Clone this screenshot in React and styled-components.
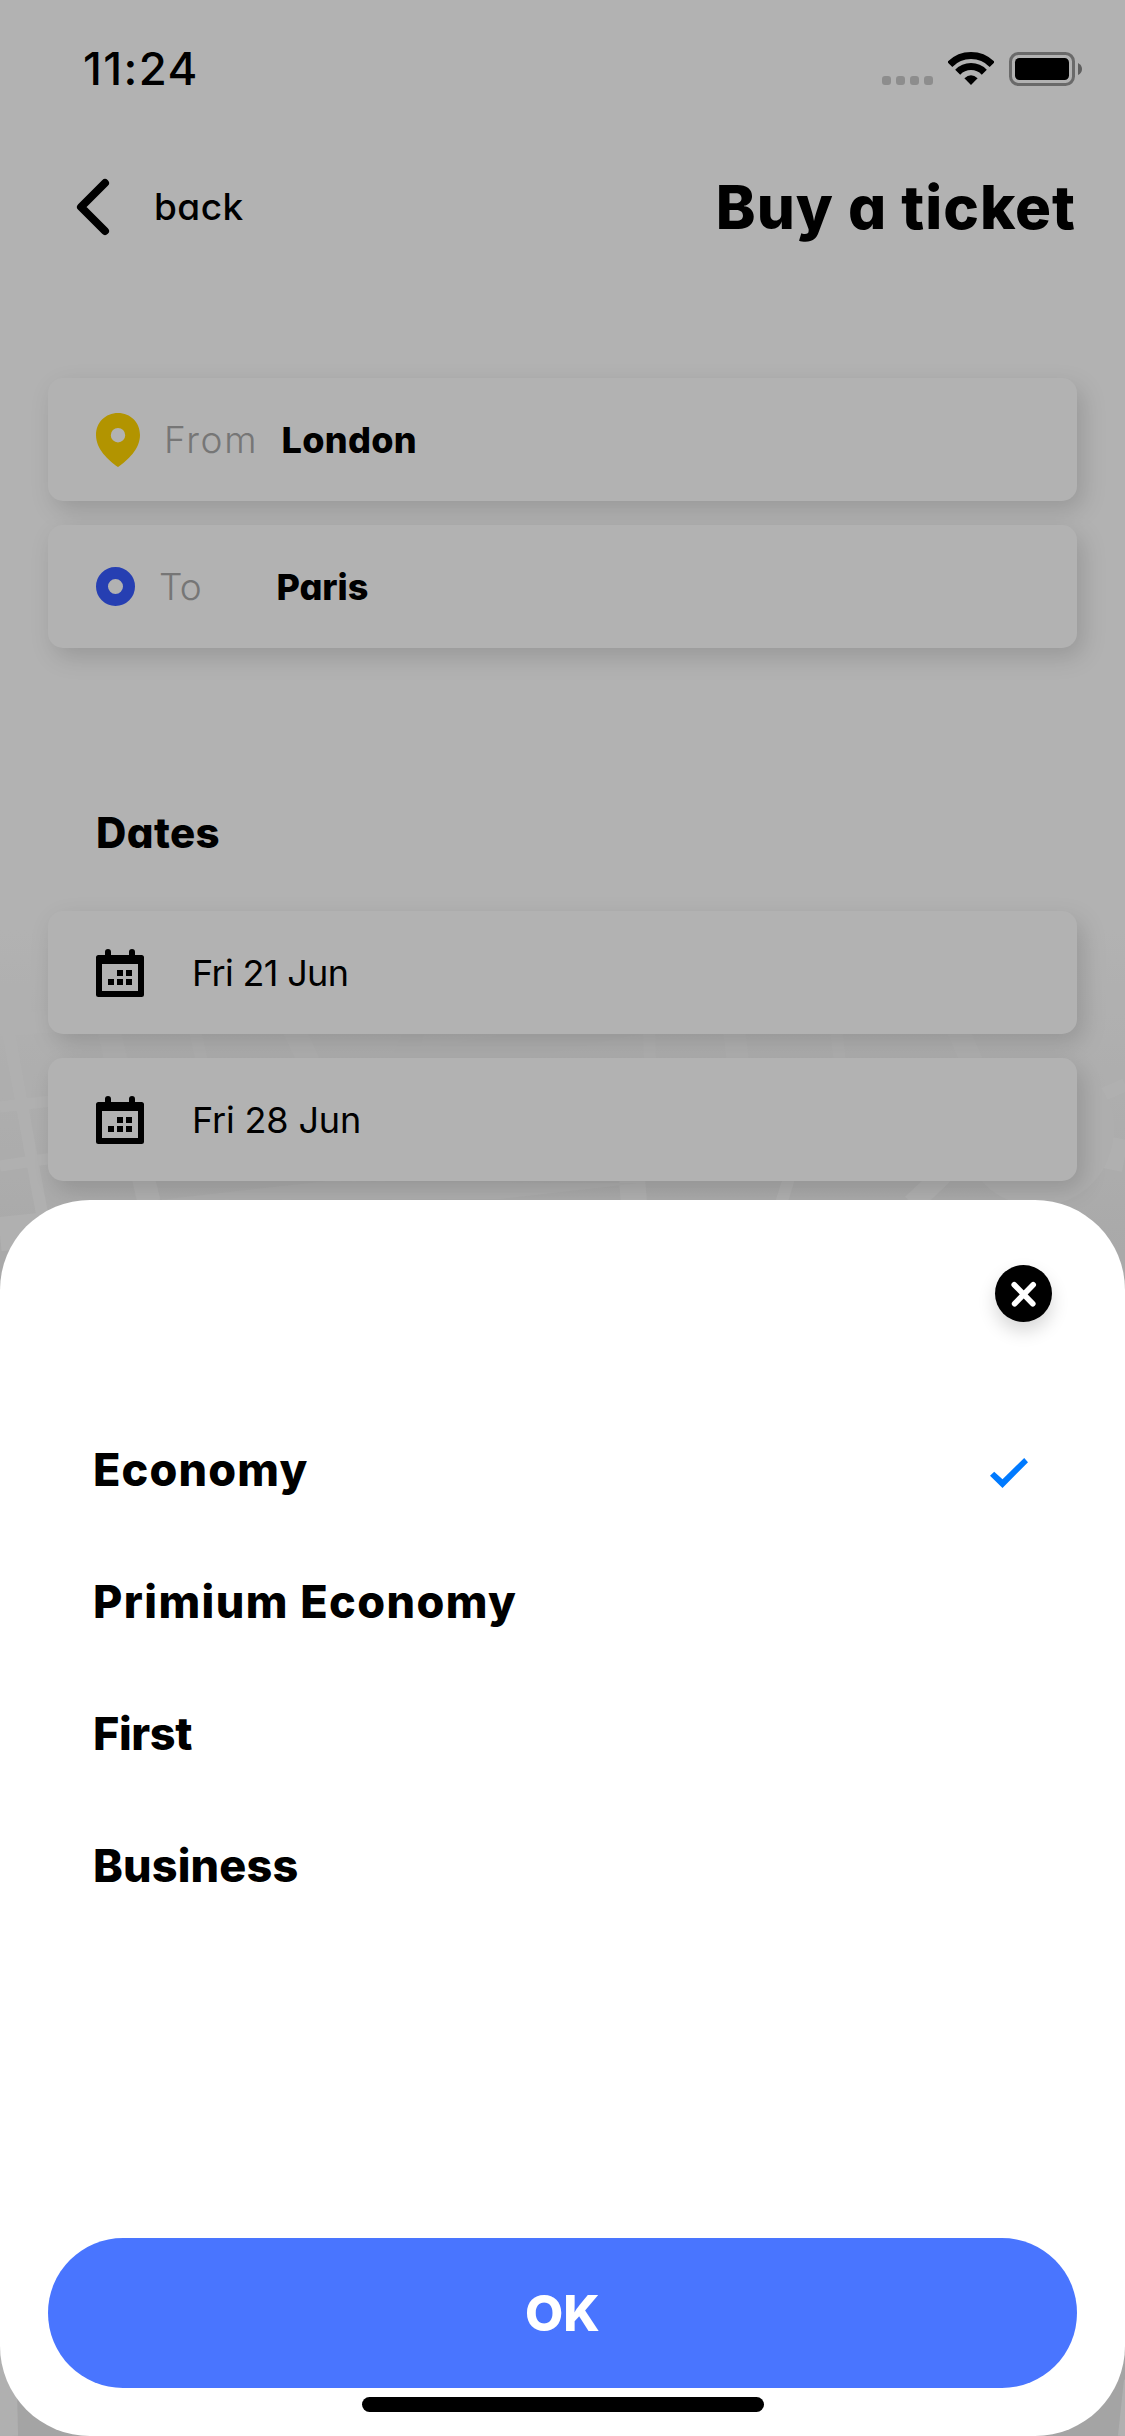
import React from "react";
import styled, { createGlobalStyle } from "styled-components";

const GlobalStyle = createGlobalStyle`
  * { box-sizing: border-box; }
  body { margin: 0; background: #fff; }
`;

const Page = styled.div`
  position: relative;
  width: 1125px;
  height: 2436px;
  overflow: hidden;
  background: #fff;
  color: #000;
  font-family: Inter, "Open Sans", sans-serif;
  font-feature-settings: "cv11" 1;
  font-size: 36px;
  white-space: nowrap;
`;

const MapArt = styled.svg`
  position: absolute;
  left: 0;
  top: 0;
`;

const Screen = styled.main`
  position: relative;
  display: flex;
  flex-direction: column;
`;

const StatusBar = styled.div`
  display: flex;
  align-items: center;
  justify-content: space-between;
  height: 138px;
  padding: 0 42px 0 83px;
`;

const Text = styled.span`
  font-size: ${(p) => p.$size || 36}px;
  font-weight: ${(p) => p.$weight || 400};
  letter-spacing: ${(p) => p.$track || 0}px;
  line-height: 60px;
`;

const StatusIcons = styled.div`
  display: flex;
  align-items: center;
  gap: 15px;
`;

const Header = styled.header`
  display: flex;
  align-items: center;
  justify-content: space-between;
  height: 138px;
  padding: 0 49px 0 75px;
`;

const Title = styled.h1`
  margin: 0;
  font-size: 60px;
  font-weight: 800;
  letter-spacing: 0.98px;
  line-height: 60px;
`;

const BackButton = styled.div`
  display: flex;
  align-items: center;
  gap: 43px;
`;

const CardStack = styled.section`
  display: flex;
  flex-direction: column;
  gap: 24px;
  margin: ${(p) => p.$top}px 48px 0;
`;

const Card = styled.div`
  display: flex;
  align-items: center;
  gap: ${(p) => p.$gap}px;
  height: 123px;
  padding-left: 48px;
  border-radius: 15px;
  background: #fff;
  box-shadow: 6px 9px 24px rgba(0, 0, 0, 0.15);
`;

const Label = styled.div`
  width: 93.5px;
  color: #a9a9a9;
`;

const Heading = styled.h2`
  margin: 155px 0 0 96px;
  font-size: 42px;
  font-weight: 800;
  letter-spacing: 0.4px;
  line-height: 60px;
`;

const Backdrop = styled.div`
  position: absolute;
  inset: 0;
  background: rgba(0, 0, 0, 0.3);
`;

const Sheet = styled.section`
  position: absolute;
  left: 0;
  right: 0;
  bottom: 0;
  height: 1236px;
  display: flex;
  flex-direction: column;
  padding: 65px 48px 24px;
  border-radius: 90px;
  background: #fff;
`;

const CloseButton = styled.div`
  align-self: flex-end;
  display: flex;
  flex: none;
  width: 57px;
  height: 57px;
  margin: 0 25.5px 82px 0;
  border-radius: 50%;
  background: #000;
  box-shadow: 0 9px 18px rgba(0, 0, 0, 0.16);
`;

const Option = styled.div`
  display: flex;
  flex: none;
  align-items: center;
  justify-content: space-between;
  height: 132px;
  padding: 0 49px 0 45px;
`;

const Check = styled.svg`
  margin-top: 5px;
`;

const OkButton = styled.div`
  display: flex;
  flex: none;
  align-items: center;
  justify-content: center;
  height: 150px;
  margin-top: auto;
  border-radius: 75px;
  background: #4975ff;
  color: #fff;
`;

const HomeBar = styled.div`
  align-self: center;
  flex: none;
  width: 402px;
  height: 15px;
  margin-top: 9px;
  border-radius: 8px;
  background: #000;
`;

function StreetMap() {
  return (
    <MapArt width="1125" height="2436" viewBox="0 0 1125 2436">
      <defs>
        <linearGradient id="land" x1="0" y1="930" x2="0" y2="1300" gradientUnits="userSpaceOnUse">
          <stop offset="0" stopColor="#fff" />
          <stop offset="0.3" stopColor="#fbfbfb" />
          <stop offset="0.6" stopColor="#f7f7f7" />
          <stop offset="1" stopColor="#f1f1f1" />
        </linearGradient>
        <linearGradient id="deep" x1="0" y1="1300" x2="0" y2="2300" gradientUnits="userSpaceOnUse">
          <stop offset="0" stopColor="#f1f1f1" />
          <stop offset="1" stopColor="#ebebeb" />
        </linearGradient>
      </defs>
      <rect x="0" y="930" width="1125" height="370" fill="url(#land)" />
      <rect x="0" y="1300" width="1125" height="1136" fill="url(#deep)" />
      <g stroke="#fdfdfd" fill="none">
        <path d="M9 1035 L45 1230" strokeWidth="12" />
        <path d="M0 1107 L60 1100 M0 1166 L60 1157" strokeWidth="11" />
        <path d="M0 1025 L130 1016" strokeWidth="22" />
        <path d="M0 1234 L60 1228" strokeWidth="34" />
        <path d="M109 1030 L149 1202" strokeWidth="23" />
        <path d="M195 1030 L202 1062 M649 1030 L650 1062 M836 1030 L840 1062" strokeWidth="12" />
        <path d="M294 1030 L309 1062 M734 1030 L738 1062 M958 1030 L972 1062" strokeWidth="22" />
        <path d="M632 1178 L634 1204" strokeWidth="26" />
        <path d="M789 1178 L781 1204" strokeWidth="12" />
        <path d="M950 1168 L912 1204" strokeWidth="20" />
        <path d="M1095 1098 L1125 1085" strokeWidth="13" />
        <path d="M1095 1150 L1125 1156" strokeWidth="32" />
        <path d="M6 2300 L9 2436" strokeWidth="18" />
        <path d="M1122 2436 L1128 2380" strokeWidth="8" />
      </g>
      <g fill="#fafafa">
        <path d="M390 1060 L404 1030 L425 1030 L420 1049 L505 1034 L640 1034 L527 1058 Z" />
        <path d="M160 1200 L327 1181 L640 1183 L500 1199 Z" />
        <circle cx="1038" cy="1130" r="76" />
      </g>
    </MapArt>
  );
}

function Wifi() {
  return (
    <svg width="46" height="34" viewBox="0 0 46 34">
      <path d="M1.8 12.5 A29.5 29.5 0 0 1 44.2 12.5 M9.7 20.2 A18.5 18.5 0 0 1 36.3 20.2" fill="none" stroke="#000" strokeWidth="7" />
      <path d="M23 33 L16.4 26.3 Q23 20 29.6 26.3 Z" />
    </svg>
  );
}

function Battery() {
  return (
    <svg width="74" height="34" viewBox="0 0 74 34">
      <rect x="1.5" y="1.5" width="63" height="31" rx="8" fill="none" stroke="#999" strokeWidth="3" />
      <rect x="6" y="6" width="54" height="22" rx="4.5" />
      <path d="M69 11 Q73 13 73 17 Q73 21 69 23 Z" fill="#888" />
    </svg>
  );
}

function SignalDots() {
  return (
    <svg width="51" height="34" viewBox="0 0 51 34" fill="#cbcbcb">
      {[0, 14, 28, 42].map((x) => (
        <rect key={x} x={x} y="24" width="9" height="9" rx="3" />
      ))}
    </svg>
  );
}

function Calendar() {
  return (
    <svg width="48" height="48" viewBox="0 0 48 48">
      <path fillRule="evenodd" d="M9 6 V3 a3 3 0 0 1 6 0 V6 H33 V3 a3 3 0 0 1 6 0 V6 H45.5 a2.5 2.5 0 0 1 2.5 2.5 V45.5 a2.5 2.5 0 0 1 -2.5 2.5 H2.5 a2.5 2.5 0 0 1 -2.5 -2.5 V8.5 A2.5 2.5 0 0 1 2.5 6 Z M6 15 V42 H42 V15 Z M21 21 h6 v6 h-6 Z M30 21 h6 v6 h-6 Z M12 30 h6 v6 h-6 Z M21 30 h6 v6 h-6 Z M30 30 h6 v6 h-6 Z" />
    </svg>
  );
}

const options = [
  { name: "Economy", track: 1.16, selected: true },
  { name: "Primium Economy", track: 1.42 },
  { name: "First", track: -0.4 },
  { name: "Business", track: 0.14 },
];

export default function App() {
  return (
    <Page>
      <GlobalStyle />
      <StreetMap />
      <Screen>
        <StatusBar>
          <Text $size={45.5} $weight={500} $track={1.4}>11:24</Text>
          <StatusIcons>
            <SignalDots />
            <Wifi />
            <Battery />
          </StatusIcons>
        </StatusBar>
        <Header>
          <BackButton>
            <svg width="36" height="58" viewBox="0 0 36 58" fill="none" stroke="#000" strokeWidth="8" strokeLinecap="round" strokeLinejoin="round">
              <path d="M30 5 L6 29 L30 53" />
            </svg>
            <Text $size={37} $weight={500} $track={0.45}>back</Text>
          </BackButton>
          <Title>Buy a ticket</Title>
        </Header>
        <CardStack $top={102}>
          <Card $gap={24}>
            <svg width="44" height="54" viewBox="0 0 44 54">
              <path fillRule="evenodd" fill="#ffd500" d="M22 0 C9.5 0 0 9.5 0 22 C0 36 12 47 22 54 C32 47 44 36 44 22 C44 9.5 34.5 0 22 0 Z M22 15 a7.2 7.2 0 1 1 0 14.4 a7.2 7.2 0 1 1 0 -14.4 Z" />
            </svg>
            <Label><Text $size={37} $weight={300} $track={1.7}>From</Text></Label>
            <Text $weight={800} $track={0.3}>London</Text>
          </Card>
          <Card $gap={24}>
            <svg width="39" height="39" viewBox="0 0 39 39">
              <circle cx="19.5" cy="19.5" r="13.5" fill="none" stroke="#375bff" strokeWidth="12" />
            </svg>
            <Label><Text $size={37} $weight={300}>To</Text></Label>
            <Text $weight={800} $track={-0.1}>Paris</Text>
          </Card>
        </CardStack>
        <Heading>Dates</Heading>
        <CardStack $top={48}>
          <Card $gap={48}>
            <Calendar />
            <Text $track={-0.67}>Fri 21 Jun</Text>
          </Card>
          <Card $gap={48}>
            <Calendar />
            <Text $track={-0.15}>Fri 28 Jun</Text>
          </Card>
        </CardStack>
      </Screen>
      <Backdrop />
      <Sheet>
        <CloseButton>
          <svg width="57" height="57" viewBox="0 0 57 57" stroke="#fff" strokeWidth="5.6" strokeLinecap="round">
            <path d="M19.2 19.7 L37.8 38.8 M38.2 19.7 L19.6 38.8" />
          </svg>
        </CloseButton>
        {options.map(({ name, track, selected }) => (
          <Option key={name}>
            <Text $size={45} $weight={800} $track={track}>{name}</Text>
            {selected && (
              <Check width="38" height="30" viewBox="0 0 38 30" fill="#007aff">
                <path d="M12.5 21.3 L34.2 0 L38 4.2 L12.5 30 L0 17.8 L4.2 13.8 Z" />
              </Check>
            )}
          </Option>
        ))}
        <OkButton>
          <Text $size={49.5} $weight={800}>OK</Text>
        </OkButton>
        <HomeBar />
      </Sheet>
    </Page>
  );
}
